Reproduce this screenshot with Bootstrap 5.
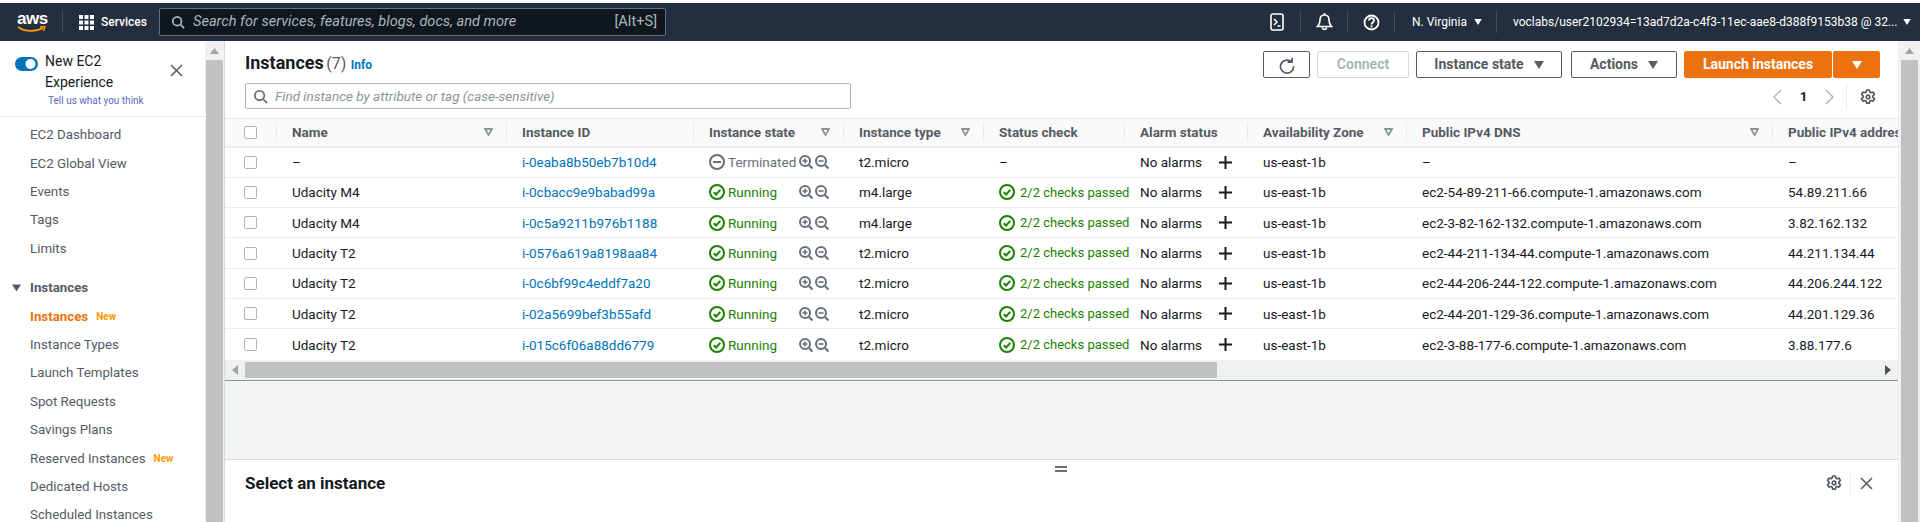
<!DOCTYPE html>
<html lang="en">
<head>
    <meta charset="UTF-8" />
    <title>Instances | EC2 Management Console</title>
    <meta name="viewport" content="width=device-width, initial-scale=1" />
    <link href="https://cdn.jsdelivr.net/npm/bootstrap@5.3.0/dist/css/bootstrap.min.css" rel="stylesheet" />
    <style>
        html, body { height: 100%; }
        body {
            font-family: Roboto, "Liberation Sans", sans-serif;
            font-size: 13.5px;
            color: #16191f;
            background-color: #fff;
            overflow: hidden;
            padding-top: 3px;
        }
        a { text-decoration: none; color: #0073bb; }
        .page-wrap { height: 519px; }
        .body-row { min-height: 0; }

        /* top bar */
        .top-bar { height: 38px; background-color: #232f3e; color: #fff; font-size: 12px; }
        .aws-mark { width: 29px; margin-left: 17px; line-height: 1; }
        .aws-word { display: block; font: 700 17px/14px "Liberation Sans", sans-serif; letter-spacing: -.5px; }
        .bar-sep { width: 1px; height: 22px; background-color: #414d5c; }
        .svc-grid { width: 15px; height: 15px; margin: 0 7px 0 16px; }
        .svc-label { font-weight: 500; width: 58px; }
        .top-search {
            width: 507px; height: 28px; background-color: #10161f; border: 1px solid #687078;
            border-radius: 2px; padding: 0 8px 0 11px; color: #aab7b8; font-size: 14.6px;
        }
        .top-search i { font-style: italic; }
        .bar-right { margin-left: auto; }
        .bar-icon { width: 47px; height: 22px; border-right: 1px solid #414d5c; }
        .region { width: 102px; height: 22px; border-right: 1px solid #414d5c; padding-left: 17px; gap: 7px; }
        .acct { width: 423px; padding-left: 16px; gap: 6px; white-space: nowrap; }
        .tri-w { width: 8px; height: 6px; }

        /* left nav */
        .side-nav { width: 205px; flex: none; overflow: hidden; color: #545b64; }
        .exp-box { height: 76px; border-bottom: 1px solid #eaeded; position: relative; }
        .exp-toggle { position: absolute; left: 15px; top: 16px; width: 23px; height: 14px; }
        .exp-title { position: absolute; left: 45px; top: 10px; line-height: 21px; color: #16191f; font-size: 14px; }
        .exp-link { position: absolute; left: 48px; top: 52px; font-size: 10px; color: #5a6ac0; }
        .exp-close { position: absolute; left: 170px; top: 23px; width: 13px; height: 13px; }
        .nav-list { padding-top: 4px; font-size: 13.3px; }
        .nav-item { height: 28.4px; padding-left: 30px; display: flex; align-items: center; color: #545b64; }
        .nav-head { font-weight: 700; padding-left: 12px; gap: 9px; margin-top: 11px; }
        .nav-on { color: #ec7211; font-weight: 700; }
        .new-tag { color: #ff9900; font-size: 10px; font-weight: 700; margin-left: 8px; }

        /* scrollbars */
        .v-scroll { width: 18px; flex: none; background-color: #f1f1f1; display: flex; flex-direction: column; align-items: center; }
        .v-scroll .thumb { flex: 1; width: 17px; background-color: #c1c1c1; }
        .v-scroll .up { width: 9px; height: 6px; margin: 7px 0 6px; }
        .side-scroll { border-right: 1px solid #d5dbdb; width: 20px; }
        .main-scroll { width: 22px; }
        .h-scroll { height: 21px; background-color: #f1f1f1; border-bottom: 1px solid #879596; }
        .h-scroll .thumb { width: 972px; height: 16px; background-color: #c1c1c1; margin-left: 7px; }
        .h-arrow { width: 6px; height: 10px; }
        .arrow-left { margin-left: 7px; }
        .arrow-right { margin-left: auto; margin-right: 7px; }

        /* instances panel */
        .main-col { min-width: 0; background-color: #f2f3f3; }
        .inst-panel { background-color: #fff; padding-top: 10px; }
        .panel-pad { padding: 0 18px 0 20px; }
        .inst-title { font-size: 18px; font-weight: 700; margin: 0; line-height: 24px; }
        .inst-title span { font-weight: 400; font-size: 16px; color: #545b64; margin-left: -2px; }
        .info-link { font-size: 12px; font-weight: 700; }
        .aws-btn {
            height: 27px; padding: 0; border: 1px solid #545b64; border-radius: 2px; background-color: #fff;
            color: #545b64; font-size: 14px; font-weight: 700; display: flex; align-items: center;
            justify-content: center; gap: 10px;
        }
        .btn-refresh { width: 47px; margin-right: 7px; }
        .btn-connect { width: 92px; margin-right: 7px; border-color: #d5dbdb; color: #aab7b8; }
        .btn-state { width: 146px; margin-right: 9px; }
        .btn-actions { width: 106px; margin-right: 7px; }
        .btn-launch { width: 148px; background-color: #ec7211; border-color: #ec7211; color: #fff; }
        .btn-launch-drop { width: 47px; margin-left: 1px; background-color: #ec7211; border-color: #ec7211; }
        .tri-g { width: 10px; height: 8px; }

        .search-row { margin-top: 5px; height: 27px; }
        .find-box {
            width: 606px; height: 26px; border: 1px solid #aab7b8; border-radius: 2px;
            padding-left: 7px; gap: 7px; color: #879596; font-style: italic;
        }
        .pager { color: #16191f; font-weight: 700; height: 27px; margin-right: 4px; }
        .pg-arrow { width: 9px; height: 16px; }
        .pg-num { width: 17px; text-align: center; margin: 0 13px; }
        .pg-sep { width: 1px; height: 27px; background-color: #eaeded; margin: 0 13px 0 12px; }
        .gear-i { width: 16px; height: 16px; color: #545b64; }

        .table-clip { margin-top: 7.5px; overflow: hidden; }
        .inst-table { width: 1673px; table-layout: fixed; margin: 0; border-collapse: collapse; font-size: 13.5px; }
        .inst-table th, .inst-table td { padding: 0; vertical-align: middle; white-space: nowrap; }
        .inst-table thead th {
            height: 29px; background-color: #fafafa; border-top: 1px solid #eaeded;
            border-bottom: 2px solid #eaeded; color: #545b64; font-weight: 700;
        }
        .inst-table tbody td { height: 30.3px; border-bottom: 1px solid #eaeded; color: #16191f; background-color: #fff; }
        .inst-table tbody tr:last-child td { height: 31.5px; border-bottom: 0; }
        .head-in { display: flex; align-items: center; justify-content: space-between; border-left: 1px solid #eaeded; height: 18px; padding: 0 13px 0 15px; }
        .cell-in { padding-left: 16px; display: flex; align-items: center; }
        .chk-in { padding-left: 19px; display: flex; }
        .chk-box { appearance: none; width: 13px; height: 13px; border: 1px solid #aab7b8; border-radius: 2px; margin: 0; background-color: #fff; flex: none; }
        .filter-tri { width: 9px; height: 8px; }
        .st-icon { width: 16px; height: 16px; flex: none; }
        .st-label { width: 71px; margin-left: 3px; }
        .st-run { color: #1d8102; }
        .st-term { color: #687078; }
        .zoom-i { width: 14px; height: 14px; margin-right: 2px; flex: none; color: #687078; }
        .chk-label { color: #1d8102; margin-left: 5px; font-size: 13px; }
        .add-i { width: 13px; height: 13px; margin-left: 19px; }
        .alarm-txt { width: 60px; }

        /* bottom panel */
        .gap-area { flex: 1; }
        .detail-panel { height: 63px; background-color: #fff; border-top: 1px solid #d5dbdb; position: relative; padding: 13px 25px 0 20px; }
        .detail-title { font-size: 17px; font-weight: 700; margin: 0; line-height: 20px; }
        .drag-bar { position: absolute; left: 830px; top: 6px; width: 12px; height: 6px; border-top: 2px solid #687078; border-bottom: 2px solid #687078; }
        .detail-tools { color: #545b64; height: 20px; }
        .detail-sep { width: 1px; height: 23px; background-color: #eaeded; margin: 0 9px 0 8px; }
        .close-i { width: 13px; height: 13px; }
    </style>
</head>
<body>

<svg width="0" height="0" class="d-block">
    <symbol id="i-tri" viewBox="0 0 10 8"><path d="M0 0h10L5 8z" fill="currentColor"/></symbol>
    <symbol id="i-mag" viewBox="0 0 16 16"><circle cx="7" cy="7" r="5" fill="none" stroke="currentColor" stroke-width="2"/><path d="M11 11l4 4" stroke="currentColor" stroke-width="2"/></symbol>
    <symbol id="i-gear" viewBox="0 0 16 16"><path d="M6.600 1h2.800l.4 2 1.200.7 2-.6 1.400 2.400-1.500 1.400v1.400l1.500 1.400-1.400 2.400-2-.6-1.200.7-.4 2H6.600l-.4-2-1.200-.7-2 .6-1.400-2.400 1.500-1.400V6.900L1.600 5.500 3 3.100l2 .6 1.200-.7z" fill="none" stroke="currentColor" stroke-width="1.700" stroke-linejoin="round"/><circle cx="8" cy="8" r="1.800" fill="none" stroke="currentColor" stroke-width="1.700"/></symbol>
    <symbol id="i-check" viewBox="0 0 16 16"><circle cx="8" cy="8" r="7" fill="none" stroke="currentColor" stroke-width="2"/><path d="M4.800 8.200l2.300 2.300 4.200-4.600" fill="none" stroke="currentColor" stroke-width="2"/></symbol>
    <symbol id="i-stop" viewBox="0 0 16 16"><circle cx="8" cy="8" r="7" fill="none" stroke="currentColor" stroke-width="2"/><path d="M4 8h8" stroke="currentColor" stroke-width="2"/></symbol>
    <symbol id="i-zin" viewBox="0 0 14 14"><circle cx="6" cy="6" r="5" fill="none" stroke="currentColor" stroke-width="2"/><path d="M10 10l3.500 3.500" stroke="currentColor" stroke-width="2.200"/><path d="M3.500 6h5M6 3.500v5" stroke="currentColor" stroke-width="1.600"/></symbol>
    <symbol id="i-zout" viewBox="0 0 14 14"><circle cx="6" cy="6" r="5" fill="none" stroke="currentColor" stroke-width="2"/><path d="M10 10l3.500 3.500" stroke="currentColor" stroke-width="2.200"/><path d="M3.500 6h5" stroke="currentColor" stroke-width="1.600"/></symbol>
    <symbol id="i-plus" viewBox="0 0 13 13"><path d="M6.500 0v13M0 6.500h13" stroke="currentColor" stroke-width="2"/></symbol>
    <symbol id="i-filter" viewBox="0 0 9 8"><path d="M1 1h7L4.500 7z" fill="none" stroke="#879596" stroke-width="1.800"/></symbol>
    <symbol id="i-x" viewBox="0 0 13 13"><path d="M1 1l11 11M12 1L1 12" stroke="currentColor" stroke-width="1.500"/></symbol>
</svg>

<div class="page-wrap d-flex flex-column">
    <header class="top-bar d-flex align-items-center flex-shrink-0">
        <div class="aws-mark">
            <span class="aws-word">aws</span>
            <svg width="29" height="7" viewBox="0 0 29 7" class="d-block"><path d="M1 1c7 5 18 5 25 1" fill="none" stroke="#ff9900" stroke-width="1.800"/><path d="M23 1l5-.5-1.500 4.500" fill="none" stroke="#ff9900" stroke-width="1.400"/></svg>
        </div>
        <span class="bar-sep ms-3"></span>
        <svg class="svc-grid" viewBox="0 0 15 15" fill="#fff"><rect width="4" height="4"/><rect x="5.500" width="4" height="4"/><rect x="11" width="4" height="4"/><rect y="5.500" width="4" height="4"/><rect x="5.500" y="5.500" width="4" height="4"/><rect x="11" y="5.500" width="4" height="4"/><rect y="11" width="4" height="4"/><rect x="5.500" y="11" width="4" height="4"/><rect x="11" y="11" width="4" height="4"/></svg>
        <span class="svc-label">Services</span>
        <div class="top-search d-flex align-items-center justify-content-between">
            <span class="d-flex align-items-center gap-2">
                <svg width="14" height="14" fill="none"><use href="#i-mag"/></svg>
                <i>Search for services, features, blogs, docs, and more</i>
            </span>
            <span>[Alt+S]</span>
        </div>
        <div class="bar-right d-flex align-items-center">
            <span class="bar-icon d-flex align-items-center justify-content-center">
                <svg width="14" height="18" viewBox="0 0 14 18" fill="none" stroke="#fff" stroke-width="1.600"><rect x="1" y="1" width="12" height="16" rx="2"/><path d="M4 6l3 3-3 3M7.500 13h3"/></svg>
            </span>
            <span class="bar-icon d-flex align-items-center justify-content-center">
                <svg width="17" height="18" viewBox="0 0 17 18" fill="none" stroke="#fff" stroke-width="1.600"><path d="M8.500 2c-3 0-4.500 2-4.500 5 0 3-1 5-2.500 6.500h14C14 12 13 10 13 7c0-3-1.500-5-4.500-5zM6.500 14.500a2 2 0 0 0 4 0M8.500 0v2"/></svg>
            </span>
            <span class="bar-icon d-flex align-items-center justify-content-center">
                <svg width="17" height="17" viewBox="0 0 17 17" fill="none" stroke="#fff" stroke-width="1.800"><circle cx="8.500" cy="8.500" r="7"/><path d="M6 6.500c0-3.200 5-3.200 5 0 0 2-2.500 2-2.500 4M8.500 11.500v2"/></svg>
            </span>
            <span class="region d-flex align-items-center">N. Virginia <svg class="tri-w"><use href="#i-tri"/></svg></span>
            <span class="acct d-flex align-items-center">voclabs/user2102934=13ad7d2a-c4f3-11ec-aae8-d388f9153b38 @ 32... <svg class="tri-w"><use href="#i-tri"/></svg></span>
        </div>
    </header>

    <div class="body-row d-flex flex-grow-1">
        <nav class="side-nav">
            <div class="exp-box">
                <svg class="exp-toggle" viewBox="0 0 23 14"><rect width="23" height="14" rx="7" fill="#0073bb"/><circle cx="15.500" cy="7" r="5" fill="#fff"/></svg>
                <div class="exp-title">New EC2<br />Experience</div>
                <a class="exp-link" href="#">Tell us what you think</a>
                <svg class="exp-close"><use href="#i-x"/></svg>
            </div>
            <div class="nav-list">
                <a class="nav-item" href="#">EC2 Dashboard</a>
                <a class="nav-item" href="#">EC2 Global View</a>
                <a class="nav-item" href="#">Events</a>
                <a class="nav-item" href="#">Tags</a>
                <a class="nav-item" href="#">Limits</a>
                <div class="nav-item nav-head"><svg width="9" height="8"><use href="#i-tri"/></svg>Instances</div>
                <a class="nav-item nav-on" href="#">Instances <span class="new-tag">New</span></a>
                <a class="nav-item" href="#">Instance Types</a>
                <a class="nav-item" href="#">Launch Templates</a>
                <a class="nav-item" href="#">Spot Requests</a>
                <a class="nav-item" href="#">Savings Plans</a>
                <a class="nav-item" href="#">Reserved Instances <span class="new-tag">New</span></a>
                <a class="nav-item" href="#">Dedicated Hosts</a>
                <a class="nav-item" href="#">Scheduled Instances</a>
            </div>
        </nav>
        <div class="v-scroll side-scroll">
            <svg class="up" viewBox="0 0 9 6"><path d="M0 6L4.500 0 9 6z" fill="#a3a3a3"/></svg>
            <div class="thumb"></div>
        </div>

        <main class="main-col flex-grow-1 d-flex flex-column">
            <section class="inst-panel">
                <div class="panel-pad d-flex justify-content-between">
                    <h1 class="inst-title">Instances <span>(7)</span> <a class="info-link" href="#">Info</a></h1>
                    <div class="d-flex">
                        <button class="aws-btn btn-refresh" type="button">
                            <svg width="18" height="18" viewBox="0 0 16 16" fill="none" stroke="#545b64" stroke-width="1.500"><path d="M12.500 1.500v4h-4M12.300 5.500A5.800 5.800 0 1 0 13.800 9"/></svg>
                        </button>
                        <button class="aws-btn btn-connect" type="button">Connect</button>
                        <button class="aws-btn btn-state" type="button">Instance state <svg class="tri-g"><use href="#i-tri"/></svg></button>
                        <button class="aws-btn btn-actions" type="button">Actions <svg class="tri-g"><use href="#i-tri"/></svg></button>
                        <button class="aws-btn btn-launch" type="button">Launch instances</button>
                        <button class="aws-btn btn-launch-drop" type="button" aria-label="Launch options"><svg class="tri-g text-white"><use href="#i-tri"/></svg></button>
                    </div>
                </div>
                <div class="panel-pad search-row d-flex justify-content-between">
                    <div class="find-box d-flex align-items-center">
                        <svg width="15" height="15" class="text-secondary"><use href="#i-mag"/></svg>
                        Find instance by attribute or tag (case-sensitive)
                    </div>
                    <div class="pager d-flex align-items-center">
                        <svg class="pg-arrow" viewBox="0 0 9 16" fill="none" stroke="#aab7b8" stroke-width="1.500"><path d="M8 1L1 8l7 7"/></svg>
                        <span class="pg-num">1</span>
                        <svg class="pg-arrow" viewBox="0 0 9 16" fill="none" stroke="#aab7b8" stroke-width="1.500"><path d="M1 1l7 7-7 7"/></svg>
                        <span class="pg-sep"></span>
                        <svg class="gear-i"><use href="#i-gear"/></svg>
                    </div>
                </div>

                <div class="table-clip">
                    <table class="table inst-table">
                        <colgroup>
                            <col style="width:51px" /><col style="width:230px" /><col style="width:187px" />
                            <col style="width:150px" /><col style="width:140px" /><col style="width:141px" />
                            <col style="width:123px" /><col style="width:159px" /><col style="width:366px" />
                            <col style="width:126px" />
                        </colgroup>
                        <thead id="instHead"></thead>
                        <tbody id="instBody"></tbody>
                    </table>
                </div>
                <div class="h-scroll d-flex align-items-center">
                    <svg class="h-arrow arrow-left" viewBox="0 0 6 10"><path d="M6 0L0 5l6 5z" fill="#a3a3a3"/></svg>
                    <div class="thumb"></div>
                    <svg class="h-arrow arrow-right" viewBox="0 0 6 10"><path d="M0 0l6 5-6 5z" fill="#505050"/></svg>
                </div>
            </section>

            <div class="gap-area"></div>

            <section class="detail-panel d-flex justify-content-between align-items-start">
                <span class="drag-bar"></span>
                <h2 class="detail-title">Select an instance</h2>
                <div class="detail-tools d-flex align-items-center">
                    <svg class="gear-i"><use href="#i-gear"/></svg>
                    <span class="detail-sep"></span>
                    <svg class="close-i"><use href="#i-x"/></svg>
                </div>
            </section>
        </main>

        <div class="v-scroll main-scroll">
            <svg class="up" viewBox="0 0 9 6"><path d="M0 6L4.500 0 9 6z" fill="#a3a3a3"/></svg>
            <div class="thumb"></div>
        </div>
    </div>
</div>

<script>
    const columns = [
        ['Name', true], ['Instance ID', false], ['Instance state', true], ['Instance type', true],
        ['Status check', false], ['Alarm status', false], ['Availability Zone', true],
        ['Public IPv4 DNS', true], ['Public IPv4 address', false]
    ];
    const instances = [
        ['–', 'i-0eaba8b50eb7b10d4', 'Terminated', 't2.micro', '–', '–', '–'],
        ['Udacity M4', 'i-0cbacc9e9babad99a', 'Running', 'm4.large', 'ok', 'ec2-54-89-211-66.compute-1.amazonaws.com', '54.89.211.66'],
        ['Udacity M4', 'i-0c5a9211b976b1188', 'Running', 'm4.large', 'ok', 'ec2-3-82-162-132.compute-1.amazonaws.com', '3.82.162.132'],
        ['Udacity T2', 'i-0576a619a8198aa84', 'Running', 't2.micro', 'ok', 'ec2-44-211-134-44.compute-1.amazonaws.com', '44.211.134.44'],
        ['Udacity T2', 'i-0c6bf99c4eddf7a20', 'Running', 't2.micro', 'ok', 'ec2-44-206-244-122.compute-1.amazonaws.com', '44.206.244.122'],
        ['Udacity T2', 'i-02a5699bef3b55afd', 'Running', 't2.micro', 'ok', 'ec2-44-201-129-36.compute-1.amazonaws.com', '44.201.129.36'],
        ['Udacity T2', 'i-015c6f06a88dd6779', 'Running', 't2.micro', 'ok', 'ec2-3-88-177-6.compute-1.amazonaws.com', '3.88.177.6']
    ];

    document.getElementById('instHead').innerHTML = '<tr><th><div class="chk-in"><input class="chk-box" type="checkbox" /></div></th>' +
        columns.map(([label, filter]) => `<th><div class="head-in"><span>${label}</span>${filter ? '<svg class="filter-tri"><use href="#i-filter"/></svg>' : ''}</div></th>`).join('') +
        '</tr>';

    document.getElementById('instBody').innerHTML = instances.map((row) => {
        const running = row[2] === 'Running';
        const status = row[4] === 'ok'
            ? '<svg class="st-icon st-run"><use href="#i-check"/></svg><span class="chk-label">2/2 checks passed</span>'
            : '–';
        return `<tr>
            <td><div class="chk-in"><input class="chk-box" type="checkbox" /></div></td>
            <td><div class="cell-in">${row[0]}</div></td>
            <td><div class="cell-in"><a href="#">${row[1]}</a></div></td>
            <td><div class="cell-in">
                <svg class="st-icon ${running ? 'st-run' : 'st-term'}"><use href="#${running ? 'i-check' : 'i-stop'}"/></svg>
                <span class="st-label ${running ? 'st-run' : 'st-term'}">${row[2]}</span>
                <svg class="zoom-i"><use href="#i-zin"/></svg><svg class="zoom-i"><use href="#i-zout"/></svg>
            </div></td>
            <td><div class="cell-in">${row[3]}</div></td>
            <td><div class="cell-in">${status}</div></td>
            <td><div class="cell-in"><span class="alarm-txt">No alarms</span><svg class="add-i"><use href="#i-plus"/></svg></div></td>
            <td><div class="cell-in">us-east-1b</div></td>
            <td><div class="cell-in">${row[5]}</div></td>
            <td><div class="cell-in">${row[6]}</div></td>
        </tr>`;
    }).join('');
</script>

<script src="https://cdn.jsdelivr.net/npm/bootstrap@5.3.0/dist/js/bootstrap.bundle.min.js"></script>
</body>
</html>
